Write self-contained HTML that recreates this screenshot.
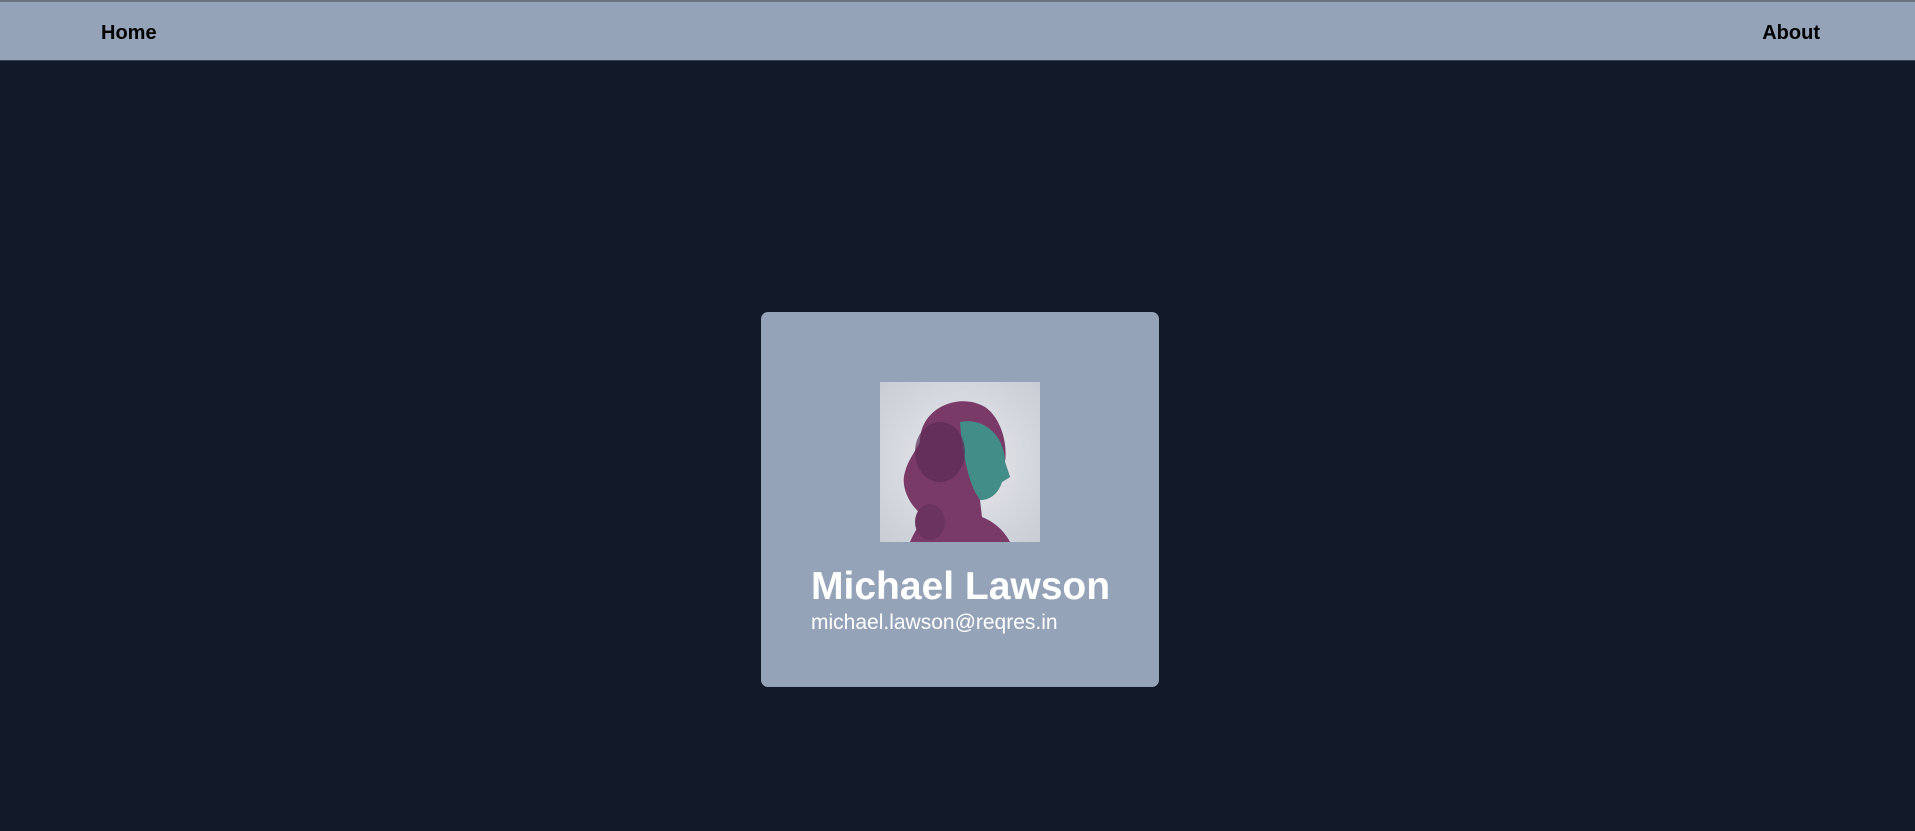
<!DOCTYPE html>
<html><head><style>
*{margin:0;padding:0;box-sizing:border-box}
body{width:1915px;height:831px;background:#111827;font-family:"Liberation Sans",sans-serif;overflow:hidden;position:relative}
nav{position:absolute;left:0;top:0;width:1915px;height:61px;background:#94a3b8;border-top:2px solid #6b7280;border-bottom:1px solid #334155}
nav span{position:absolute;top:20px;font-weight:bold;font-size:20px;color:#000}
.card{position:absolute;left:761px;top:312px;width:398px;height:375px;background:#94a3b8;border-radius:7px}
.img{position:absolute;left:119px;top:70px;width:160px;height:160px;background:radial-gradient(ellipse at 50% 50%,#e8eaee,#c9ccd4);overflow:hidden}
.name{position:absolute;left:50px;top:253px;font-size:39px;font-weight:bold;color:#fff;white-space:nowrap}
.mail{position:absolute;left:50px;top:299px;font-size:21px;color:#fff;white-space:nowrap}
</style></head><body>
<nav><span style="left:101px">Home</span><span style="right:95px">About</span></nav>
<div class="card">
<div class="img"><svg width="160" height="160" viewBox="0 0 160 160">
<path d="M40 60 C40 25 80 10 105 25 C120 35 128 60 125 80 L130 95 L122 100 C118 112 110 118 100 118 L102 135 C115 140 125 150 130 160 L30 160 C35 148 40 142 45 135 C30 125 20 105 25 90 C28 78 35 70 40 60Z" fill="#7a3a68"/>
<path d="M80 40 C105 35 125 55 125 80 L130 95 L122 100 C118 112 110 118 100 118 L95 110 C88 95 82 70 80 40Z" fill="#3a9c8e" opacity=".85"/>
<ellipse cx="60" cy="70" rx="25" ry="30" fill="#5b2c55" opacity=".7"/>
<ellipse cx="50" cy="140" rx="15" ry="18" fill="#6b3460"/>
</svg></div>
<div class="name">Michael Lawson</div>
<div class="mail">michael.lawson@reqres.in</div>
</div>
</body></html>
